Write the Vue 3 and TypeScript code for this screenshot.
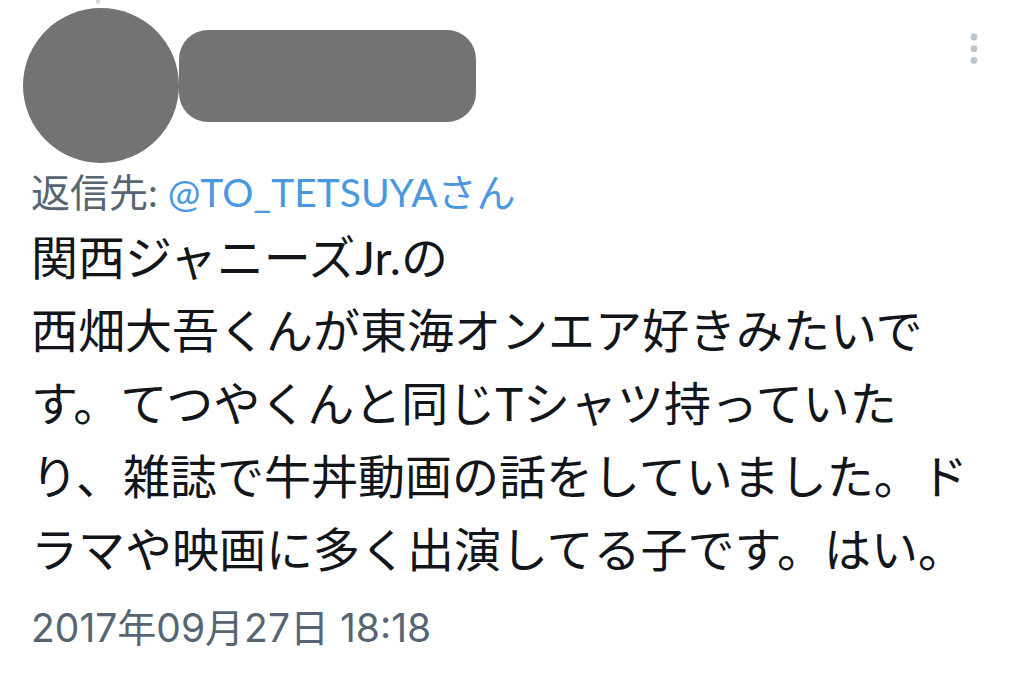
<script setup lang="ts">
const lines: string[] = [
  '関西ジャニーズJr.の',
  '西畑大吾くんが東海オンエア好きみたいで',
  'す。てつやくんと同じTシャツ持っていた',
  'り、雑誌で牛丼動画の話をしていました。ド',
  'ラマや映画に多く出演してる子です。はい。',
]
</script>

<template>
  <article class="post">
    <span class="thread"></span>
    <header class="head">
      <div class="avatar"></div>
      <div class="name"></div>
      <button class="more" type="button" aria-label="もっと見る">
        <svg viewBox="0 0 8 32" width="8" height="32" aria-hidden="true">
          <circle cx="4" cy="4" r="3.4" /><circle cx="4" cy="15.7" r="3.4" /><circle cx="4" cy="27.4" r="3.4" />
        </svg>
      </button>
    </header>
    <p class="reply">返信先: <a href="#">@TO_TETSUYAさん</a></p>
    <p class="body"><span v-for="line in lines" :key="line" class="line">{{ line }}</span></p>
    <time class="date" datetime="2017-09-27T18:18">2017年09月27日 18:18</time>
  </article>
</template>

<style>
body { margin: 0; background: #fff; }
</style>

<style scoped>
.post {
  position: relative;
  padding: 8px 31px 24px;
  font-family: Lato, "Noto Sans CJK JP", sans-serif;
  color: #12161b;
}
.thread { position: absolute; top: 0; left: 96px; width: 4px; height: 4px; border-radius: 0 0 2px 2px; background: #cfd9de; }
.head { display: flex; align-items: flex-start; margin-left: -8px; }
.avatar { width: 156px; height: 155px; border-radius: 50%; background: #737373; }
.name { width: 297px; height: 92px; margin-top: 22px; border-radius: 29px; background: #737373; }
.more { margin: 25px 15px 0 auto; padding: 0; border: 0; background: none; line-height: 0; }
.more svg { fill: #b9c6d0; }
.reply { margin: 0; font-size: 39px; line-height: 58px; color: #566573; white-space: nowrap; }
.reply a { color: #4a99e0; text-decoration: none; }
.body { margin: 0; font-size: 47px; line-height: 73px; }
.line { display: block; white-space: nowrap; }
.date { display: block; margin-top: 14px; font-family: Inter, "Noto Sans CJK JP", sans-serif; font-size: 39px; line-height: 56px; color: #566573; }
</style>
